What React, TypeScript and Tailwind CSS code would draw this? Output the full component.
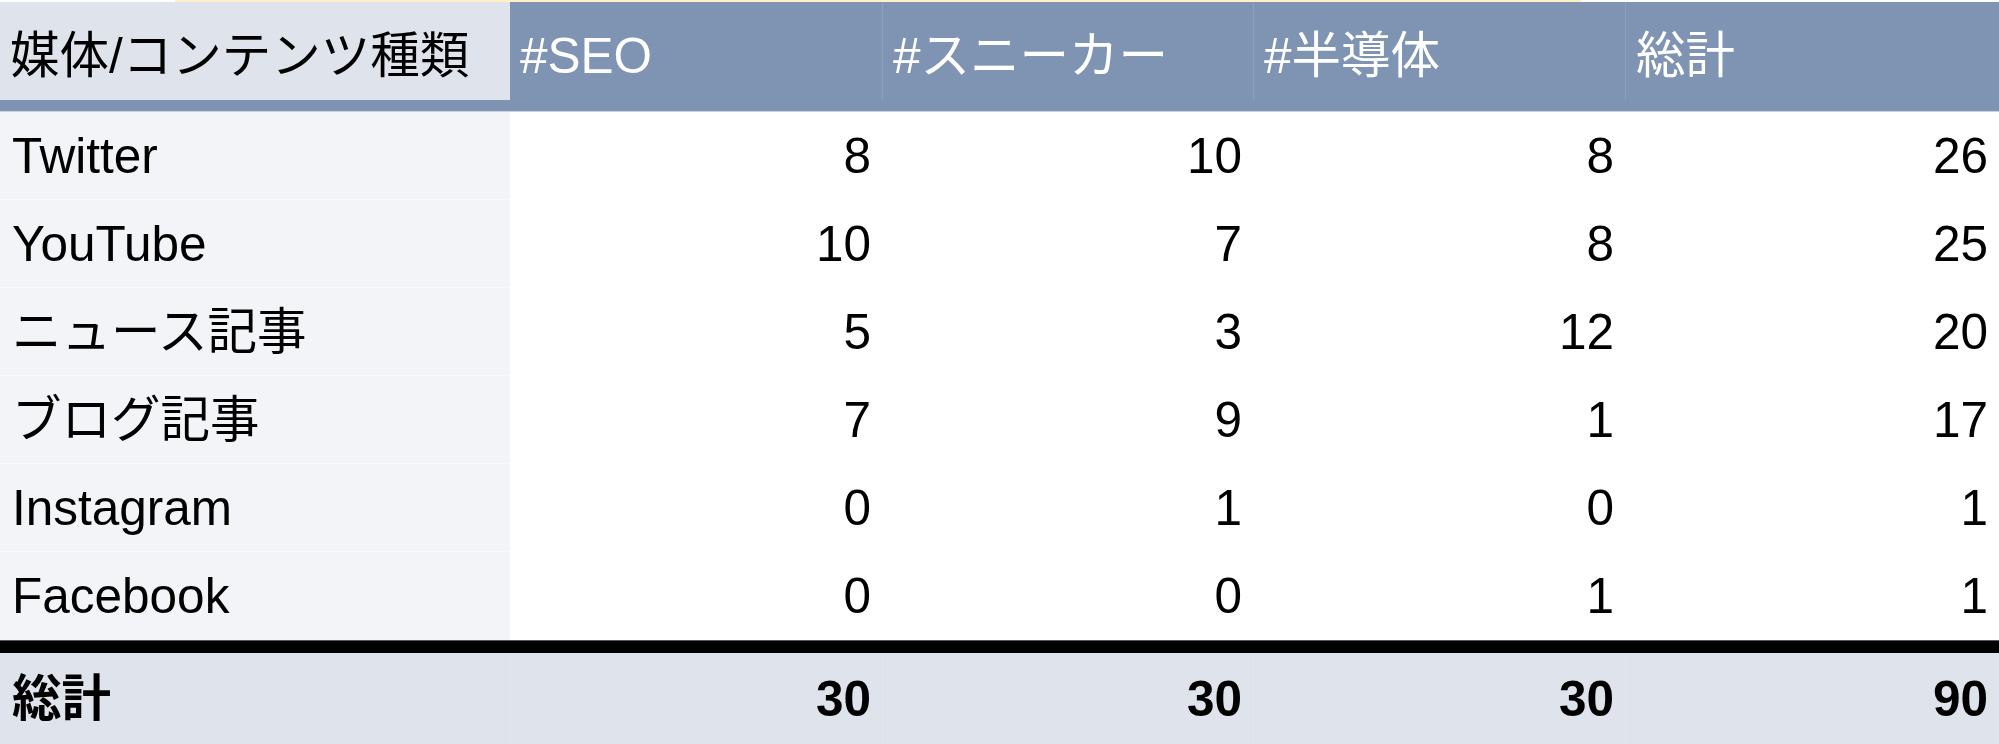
import React from "react";

const rows: [string, number[]][] = [
  ["Twitter", [8, 10, 8, 26]],
  ["YouTube", [10, 7, 8, 25]],
  ["ニュース記事", [5, 3, 12, 20]],
  ["ブログ記事", [7, 9, 1, 17]],
  ["Instagram", [0, 1, 0, 1]],
  ["Facebook", [0, 0, 1, 1]],
];

const headers = ["#SEO", "#スニーカー", "#半導体", "総計"];
const totals = [30, 30, 30, 90];

const cols = "grid grid-cols-[510px_372px_371px_372px_1fr]";

export default function App() {
  return (
    <div
      className="w-[1999px] h-[744px] bg-white flex flex-col overflow-hidden text-[49.5px] leading-none text-black"
      style={{ fontFamily: '"Liberation Sans", "Noto Sans CJK JP", sans-serif' }}
    >
      {/* top strip */}
      <div className="h-[2px] flex">
        <div className="w-[175px] bg-white" />
        <div className="w-[1406px] bg-[#fdefc6]" />
        <div className="flex-1 bg-white" />
      </div>

      {/* header */}
      <div className={`${cols} h-[98px] bg-[#7f93b3]`}>
        <div className="bg-[#dfe3ec] flex items-center pl-[10px] pt-[10px]">媒体/コンテンツ種類</div>
        {headers.map((h, i) => (
          <div
            key={h}
            className={`flex items-center pl-[10px] pt-[10px] text-white ${i > 0 ? "border-l border-[#8c9fbd]" : ""}`}
          >
            {h}
          </div>
        ))}
      </div>
      <div className="h-[12px] bg-[#7f93b3] border-b border-[#c9d2e1]" />

      {/* body */}
      <div className="flex flex-col">
        {rows.map(([label, vals], r) => (
          <div key={label} className={`${cols} h-[88px]`}>
            <div
              className={`bg-[#f3f4f7] flex items-center pl-[12px] ${
                r < rows.length - 1 ? "border-b border-[#f8f9fb]" : ""
              }`}
            >
              {label}
            </div>
            {vals.map((v, i) => (
              <div key={i} className="flex items-center justify-end pr-[11px]">
                {v}
              </div>
            ))}
          </div>
        ))}
      </div>

      {/* heavy divider */}
      <div className="h-[13px] bg-black border-t border-[#555555]" />

      {/* footer */}
      <div className={`${cols} flex-1 bg-[#dfe3ec] font-bold`}>
        <div className="flex items-center pl-[12px]">総計</div>
        {totals.map((t, i) => (
          <div key={i} className="flex items-center justify-end pr-[11px] border-l border-[#e3e6ee]">
            {t}
          </div>
        ))}
      </div>
    </div>
  );
}
